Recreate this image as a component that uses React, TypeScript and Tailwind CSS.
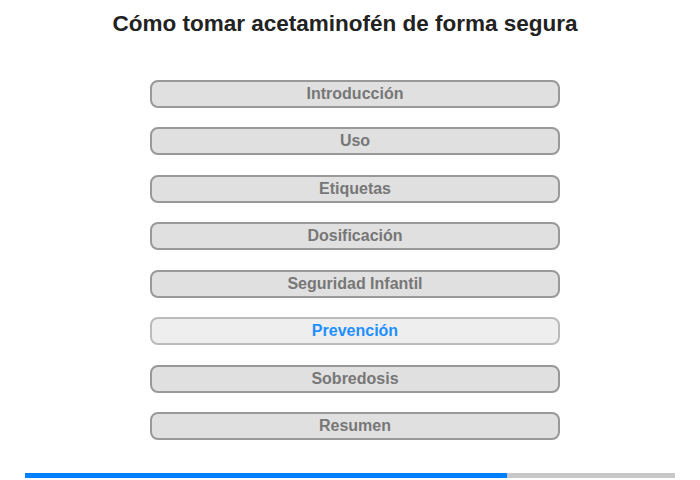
const secciones = [
  "Introducción",
  "Uso",
  "Etiquetas",
  "Dosificación",
  "Seguridad Infantil",
  "Prevención",
  "Sobredosis",
  "Resumen",
];

const activa = "Prevención";

export default function App() {
  return (
    <div className="w-[700px] h-[480px] bg-white font-['Liberation_Sans',Arial,sans-serif] flex flex-col">
      <h1 className="pt-[12px] text-center text-[22.5px] leading-[24px] font-bold text-[#222] pr-[10px]">
        Cómo tomar acetaminofén de forma segura
      </h1>

      <div className="mt-[43.5px] ml-[150px] w-[410px] flex flex-col gap-[19.5px]">
        {secciones.map((s) =>
          s === activa ? (
            <div
              key={s}
              className="h-[28px] rounded-[8px] border-2 border-[#bbbbbb] bg-[#eeeeee] flex items-center justify-center text-[16px] font-bold text-[#1e8fff]"
            >
              {s}
            </div>
          ) : (
            <div
              key={s}
              className="h-[28px] rounded-[8px] border-2 border-[#999999] bg-[#e0e0e0] flex items-center justify-center text-[16px] font-bold text-[#777777]"
            >
              {s}
            </div>
          )
        )}
      </div>

      <div className="mt-[33px] mx-[25px] h-[5px] bg-[#c8c8c8] flex">
        <div className="h-full bg-[#0080ff]" style={{ width: `${(482 / 650) * 100}%` }} />
      </div>
    </div>
  );
}
